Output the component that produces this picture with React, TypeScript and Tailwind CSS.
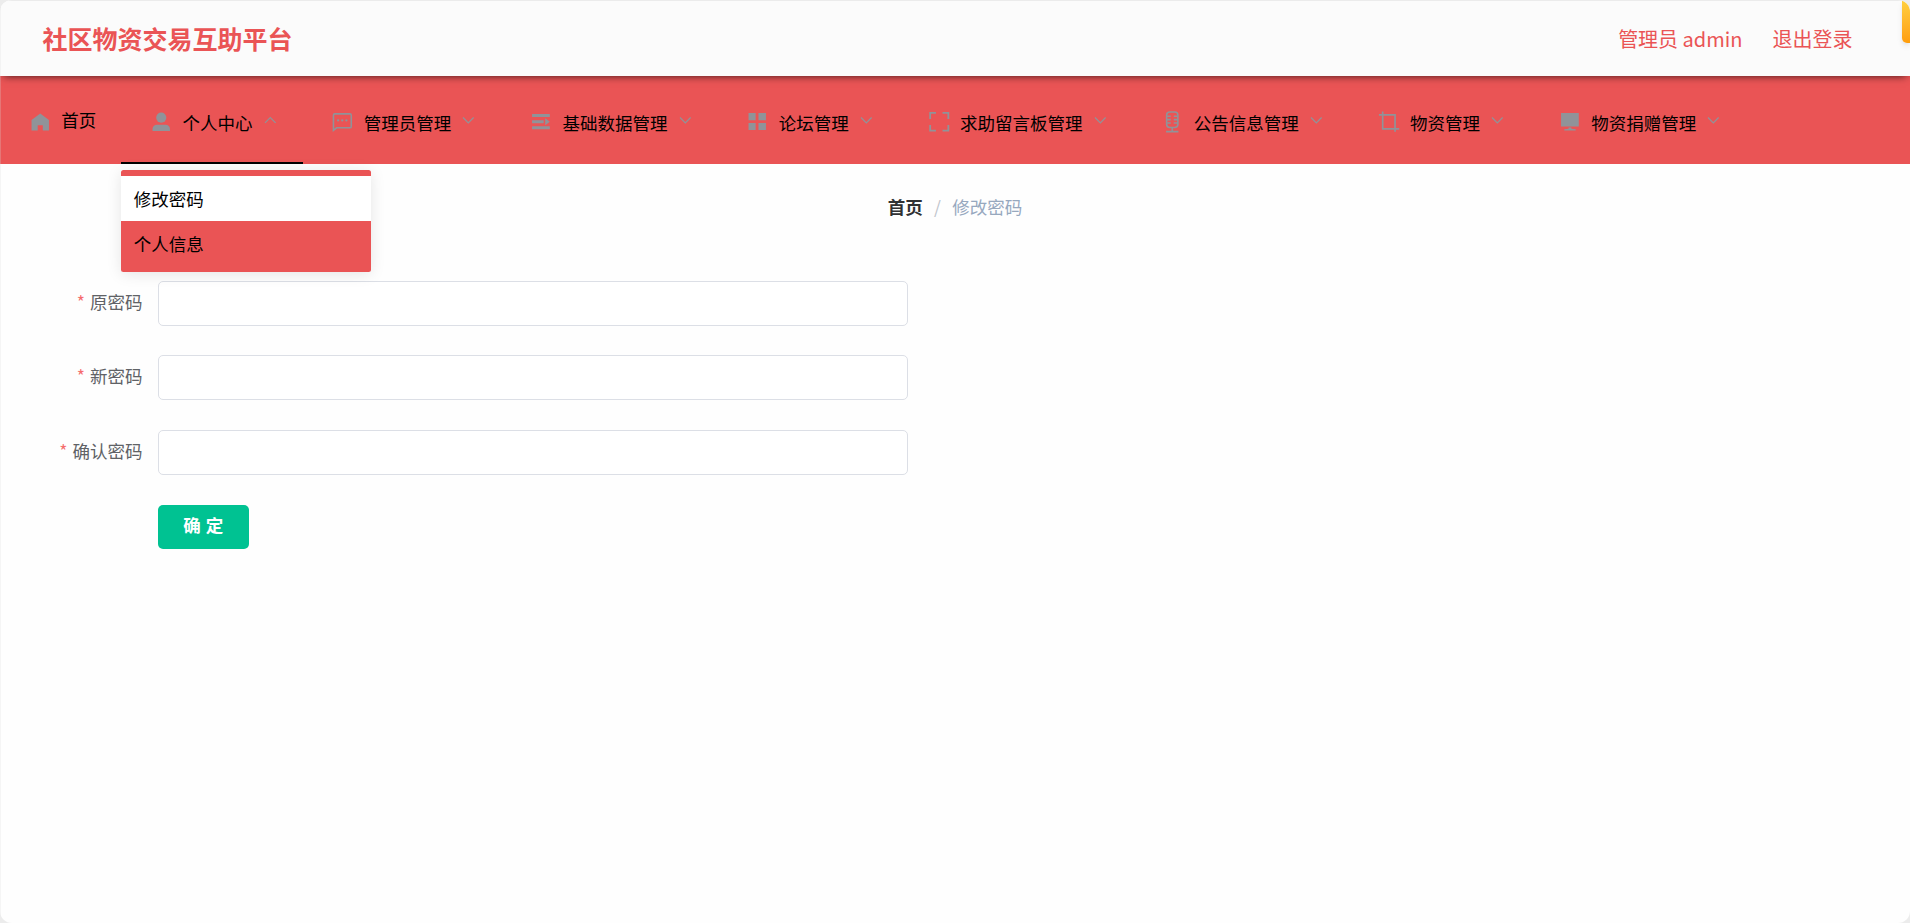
import type { ReactNode } from "react";

const icons: Record<string, ReactNode> = {
  home: <path d="M12 2.6 2.7 9.6v11.1h6.6v-5.6h5.4v5.6h6.6V9.6z" />,
  user: (
    <>
      <circle cx="12" cy="7" r="5.4" />
      <path d="M2.7 21.3v-2.1c0-2.8 2-4.6 4.6-4.6h9.4c2.6 0 4.6 1.8 4.6 4.6v2.1z" />
    </>
  ),
  chat: (
    <>
      <path
        d="M2.6 20.6V4.6c0-1 .5-1.5 1.5-1.5h16c1 0 1.5.5 1.5 1.5v11.8c0 1-.5 1.5-1.5 1.5H6z"
        fill="none"
        stroke="currentColor"
        strokeWidth="1.7"
      />
      <circle cx="7.6" cy="10" r="1.2" />
      <circle cx="12" cy="10" r="1.2" />
      <circle cx="16.4" cy="10" r="1.2" />
    </>
  ),
  operation: <path d="M2.2 3.2h18.9v3.2H2.2zM2.2 9.9h12.4v3.2H2.2zM16.2 7.7l4.9 3.8-4.9 3.8zM2.2 16.2h18.9v3.2H2.2z" />,
  menu: <path d="M2.7 2.2h7.6v7.6H2.7zM13.3 2.2h8v7.6h-8zM2.7 12.9h7.6v7.4H2.7zM13.3 12.9h8v7.4h-8z" />,
  fullscreen: (
    <path
      d="M2.3 8.4V2h6.2M15.5 2h6.2v6.4M21.7 15v6h-6.2M8.5 21H2.3v-6"
      fill="none"
      stroke="currentColor"
      strokeWidth="1.9"
    />
  ),
  microphone: (
    <g fill="none" stroke="currentColor" strokeWidth="1.7">
      <rect x="6" y="1" width="12" height="16.6" rx="3.4" />
      <path d="M6 5.6h4.4M6 9.2h4.4M6 12.8h4.4M18 5.6h-4.4M18 9.2h-4.4M18 12.8h-4.4M12 17.6v4.4M5.4 22h13.2" />
    </g>
  ),
  crop: (
    <path
      d="M5 .6v18.4h17.6M1 4.2h17.2v17.8"
      fill="none"
      stroke="currentColor"
      strokeWidth="1.8"
    />
  ),
  platform: <path d="M2.2 2.2h18.9v14.4H2.2zM10.2 17.7h3v1.3l4.6.4v1.3H5.6v-1.3l4.6-.4z" />,
};

const menus = [
  { name: "个人中心", icon: "user", open: true },
  { name: "管理员管理", icon: "chat" },
  { name: "基础数据管理", icon: "operation" },
  { name: "论坛管理", icon: "menu" },
  { name: "求助留言板管理", icon: "fullscreen" },
  { name: "公告信息管理", icon: "microphone" },
  { name: "物资管理", icon: "crop" },
  { name: "物资捐赠管理", icon: "platform" },
];

const fields = ["原密码", "新密码", "确认密码"];

function MenuIcon({ name }: { name: string }) {
  return (
    <span className="mr-[6.25px] flex w-[30px] shrink-0 justify-center pt-[3.5px] text-[#909399]">
      <svg viewBox="0 0 24 24" className="size-[22.5px]" fill="currentColor">
        {icons[name]}
      </svg>
    </span>
  );
}

function Arrow({ open }: { open?: boolean }) {
  return (
    <svg
      viewBox="0 0 15 15"
      className="mt-px ml-[10px] size-[15px] shrink-0 text-[#909399]"
      fill="none"
      stroke="currentColor"
      strokeWidth="1.2"
    >
      <path d={open ? "M2 9.8 7.3 4.5 12.6 9.8" : "M2 4.5 7.3 9.8 12.6 4.5"} />
    </svg>
  );
}

function Header() {
  return (
    <header className="relative z-10 flex h-[76px] items-center justify-between border-t border-[#ebebeb] bg-[#fbfbfb] pr-[57.5px] pl-[42.5px] text-[#ea5455] shadow-[0_4px_8px_-4px_rgba(0,0,0,0.75)]">
      <h1 className="text-[25px] leading-[37px] font-bold">社区物资交易互助平台</h1>
      <div className="flex gap-[30px] text-xl">
        <span>管理员 admin</span>
        <span>退出登录</span>
      </div>
      {/* Drawer handle */}
      <div className="absolute -top-px right-0 h-[43px] w-2 rounded-bl-[5px] bg-linear-to-b from-[#ffd03f] to-[#ff9d0a] shadow-md" />
    </header>
  );
}

function SubMenu() {
  return (
    <div className="absolute top-[94px] left-0 z-20 w-[250px] rounded-[2.5px] bg-[#ea5455] pt-[6px] pb-[6px] shadow-[0_2px_15px_rgba(0,0,0,0.1)]">
      <div className="flex h-[45px] items-center bg-white px-[12.5px]">修改密码</div>
      <div className="flex h-[45px] items-center px-[12.5px]">个人信息</div>
    </div>
  );
}

function NavMenu() {
  return (
    <nav className="flex h-[88px] bg-[#ea5455] text-black">
      <div className="flex items-center px-[25px]">
        <MenuIcon name="home" />
        <span>首页</span>
      </div>
      {menus.map((menu) => (
        <div key={menu.name} className="relative">
          <div
            className={
              menu.open
                ? "flex h-full items-center border-y-2 border-t-transparent border-b-black px-[25px]"
                : "flex h-full items-center border-y-2 border-transparent px-[25px]"
            }
          >
            <MenuIcon name={menu.icon} />
            <span className="pt-[5px]">{menu.name}</span>
            <Arrow open={menu.open} />
          </div>
          {menu.open && <SubMenu />}
        </div>
      ))}
    </nav>
  );
}

export default function App() {
  return (
    <div className="h-[923px] bg-[#ececec] font-['Noto_Sans_CJK_SC',sans-serif] text-[17.5px] leading-[26px]">
      <div className="relative h-full overflow-hidden rounded-xl bg-[#fefefe]">
        <Header />
        <NavMenu />
        <main>
          <div className="flex h-[87px] justify-center pt-[30px]">
            <span className="font-bold text-[#303133]">首页</span>
            <span className="mx-[11.25px] text-[#c0c4cc]">/</span>
            <span className="text-[#97a8be]">修改密码</span>
          </div>
          <form className="w-[908px] pt-[30px]">
            {fields.map((field) => (
              <label key={field} className="mb-[29.4px] flex h-[45px]">
                <span className="w-[158px] shrink-0 pt-[8px] pr-[15.6px] text-right text-[#606266]">
                  <span className="mr-[5px] text-[#f56c6c]">*</span>
                  {field}
                </span>
                <input type="password" className="h-[45px] flex-1 rounded-[5px] border border-[#dcdfe6] bg-white outline-none" />
              </label>
            ))}
            <button
              type="button"
              className="mt-[30.2px] ml-[158px] flex h-11 w-[91px] justify-center rounded-[5px] bg-[#00c292] pt-[7px] font-bold tracking-[0.5px] text-white"
            >
              确&nbsp;定
            </button>
          </form>
        </main>
        {/* Window edge */}
        <div className="pointer-events-none absolute inset-y-0 left-0 z-30 w-px bg-[#dcdcdc]/25" />
      </div>
    </div>
  );
}
